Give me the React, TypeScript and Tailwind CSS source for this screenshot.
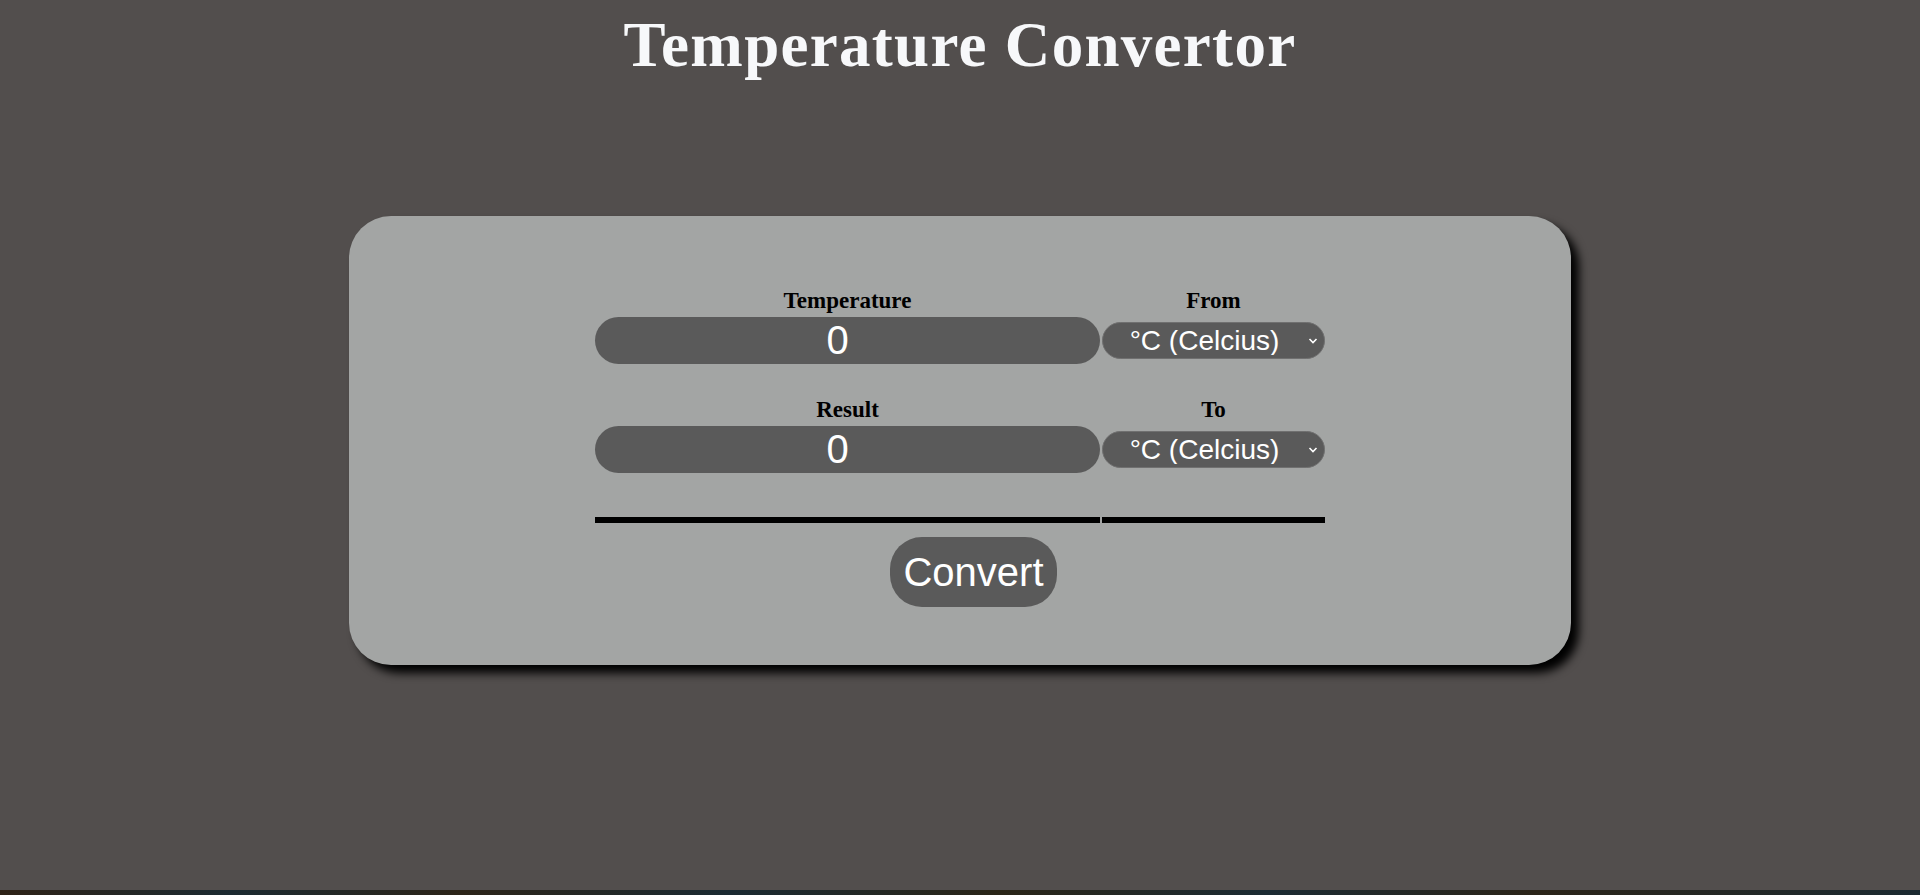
import { useState } from "react";

const units = ["°C (Celcius)", "°F (Fahrenheit)", "K (Kelvin)"];

const sans = "font-['Liberation_Sans',Arial,sans-serif]";
const serif = "font-['Liberation_Serif','Times_New_Roman',serif]";

const UnitSelect = ({ value, onChange }: { value: string; onChange: (v: string) => void }) => {
  return (
    <div className="relative h-[37px] w-full">
      <select
        value={value}
        onChange={(e) => onChange(e.target.value)}
        className={`${sans} h-full w-full appearance-none rounded-full border border-[#707070] bg-[#5a5a5a] pr-[18px] text-center text-[28px] leading-none text-white outline-none [text-align-last:center]`}
      >
        {units.map((u) => (
          <option key={u} value={u}>
            {u}
          </option>
        ))}
      </select>
      <svg
        className="pointer-events-none absolute top-1/2 right-[7px] -translate-y-1/2"
        width="10"
        height="7"
        viewBox="0 0 10 7"
        fill="none"
      >
        <path d="M1.5 1.5l3.5 3.5 3.5-3.5" stroke="#ffffff" strokeWidth="1.6" />
      </svg>
    </div>
  );
};

const Label = ({ children }: { children: string }) => (
  <div className={`${serif} h-[26px] text-center text-[23px] leading-[26px] font-bold text-black`}>
    {children}
  </div>
);

const NumberField = ({ value, onChange }: { value: string; onChange?: (v: string) => void }) => (
  <input
    type="text"
    value={value}
    readOnly={!onChange}
    onChange={(e) => onChange?.(e.target.value)}
    className={`${sans} h-[47px] w-full rounded-full bg-[#5a5a5a] pr-[20px] text-center text-[40px] leading-none text-white outline-none`}
  />
);

export default function App() {
  const [temp, setTemp] = useState("0");
  const [from, setFrom] = useState(units[0]);
  const [to, setTo] = useState(units[0]);

  return (
    <div className="flex h-[895px] flex-col bg-[#524e4d]">
      <div className="flex-1">
        <h1
          className={`${serif} pt-[9px] text-center text-[63px] leading-[72px] font-bold tracking-[1.3px] text-[#f7f8fa]`}
        >
          Temperature Convertor
        </h1>

        <div className="mx-auto mt-[135px] flex h-[449px] w-[1222px] flex-col items-center rounded-[42px] bg-[#a3a5a4] pt-[72px] shadow-[8px_8px_10px_#000]">
          <div className="grid grid-cols-[505px_223px] gap-x-[2px]">
            <Label>Temperature</Label>
            <Label>From</Label>
            <div className="mt-[3px] flex h-[47px] items-center">
              <NumberField value={temp} onChange={setTemp} />
            </div>
            <div className="mt-[3px] flex h-[47px] items-center">
              <UnitSelect value={from} onChange={setFrom} />
            </div>

            <div className="mt-[33px]">
              <Label>Result</Label>
            </div>
            <div className="mt-[33px]">
              <Label>To</Label>
            </div>
            <div className="mt-[3px] flex h-[47px] items-center">
              <NumberField value="0" />
            </div>
            <div className="mt-[3px] flex h-[47px] items-center">
              <UnitSelect value={to} onChange={setTo} />
            </div>

            <div className="mt-[44px] h-[6px] bg-black" />
            <div className="mt-[44px] h-[6px] bg-black" />
          </div>

          <button
            className={`${sans} mt-[14px] ml-[27px] h-[70px] rounded-[32px] bg-[#5a5a5a] px-[13px] text-[40px] leading-none text-white`}
          >
            Convert
          </button>
        </div>
      </div>
      <div className="h-[5px] bg-[linear-gradient(90deg,#2e2216_0%,#1b2a31_12%,#2c2418_24%,#1a2a32_38%,#2a2517_52%,#1b2b33_66%,#2b2418_80%,#1b2a31_100%)]" />
    </div>
  );
}
